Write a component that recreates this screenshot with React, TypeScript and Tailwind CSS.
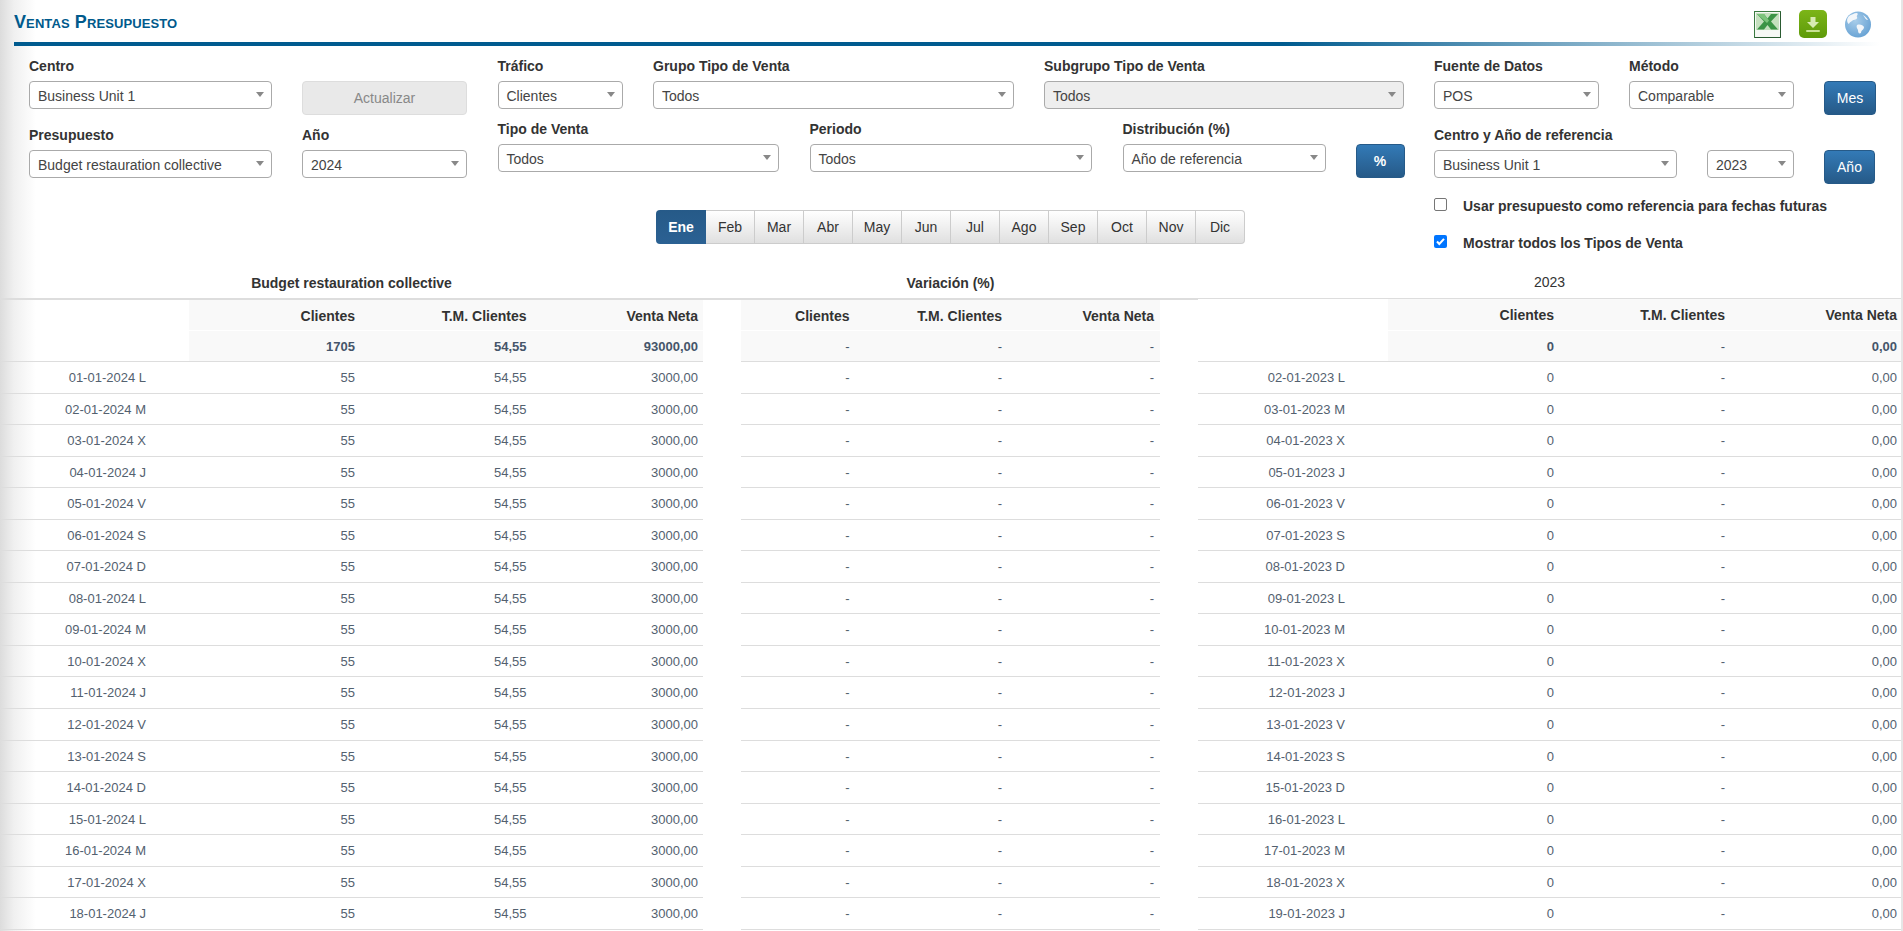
import React from "react";

const FONT = "font-['Liberation_Sans',Arial,sans-serif]";

function Label({ children }: { children: React.ReactNode }) {
  return <div className="h-[20px] text-[14px] leading-[20px] font-bold text-[#333] whitespace-nowrap">{children}</div>;
}

function Select({ value, disabled }: { value: string; disabled?: boolean }) {
  return (
    <div className={`relative mt-[5px] h-[28px] rounded-[4px] border border-[#aaa] pl-[8px] text-[14px] leading-[28px] text-[#444] ${disabled ? "bg-[#eee]" : "bg-white"}`}>
      <span className="whitespace-nowrap">{value}</span>
      <span className="absolute right-[7px] top-[10px] h-0 w-0 border-x-[4px] border-t-[5px] border-x-transparent border-t-[#888]" />
    </div>
  );
}

function Field({ label, value, w, disabled }: { label: string; value: string; w: string; disabled?: boolean }) {
  return (
    <div className={`${w} shrink-0`}>
      <Label>{label}</Label>
      <Select value={value} disabled={disabled} />
    </div>
  );
}

function BlueButton({ children, w, className = "" }: { children: React.ReactNode; w: string; className?: string }) {
  return (
    <div className={`${w} ${className} flex h-[34px] shrink-0 items-center justify-center rounded-[4px] border border-[#265a88] bg-gradient-to-b from-[#337ab7] to-[#265a88] text-[14px] text-white`}>
      {children}
    </div>
  );
}

const MONTHS = ["Feb", "Mar", "Abr", "May", "Jun", "Jul", "Ago", "Sep", "Oct", "Nov", "Dic"];

function Months() {
  return (
    <div className="flex pl-[656px]">
      <div className="flex h-[34px] w-[50px] items-center justify-center rounded-l-[4px] bg-gradient-to-b from-[#265a88] to-[#2b6193] text-[14px] font-bold text-white">Ene</div>
      {MONTHS.map((m, i) => (
        <div
          key={m}
          className={`flex h-[34px] w-[49px] items-center justify-center border-y border-r border-[#ccc] bg-gradient-to-b from-white to-[#e0e0e0] text-[14px] text-[#333] ${i === MONTHS.length - 1 ? "rounded-r-[4px]" : ""}`}
        >
          {m}
        </div>
      ))}
    </div>
  );
}

function ExcelIcon() {
  return (
    <svg width="27" height="27" viewBox="0 0 27 27">
      <rect x="0.5" y="0.5" width="26" height="26" fill="#f4f8f3" stroke="#3a7a40" />
      <rect x="2" y="2" width="23" height="17" fill="#c4e0be" />
      <path d="M3 3h7l3.500 4.500L17 3h7l-7 7.500 7 8h-7l-3.500-4.500L10 18.500H3l7-8z" fill="#3b9446" />
      <path d="M3 3h7l5 6.500-2 2.500z" fill="#7cc47c" />
      <rect x="2" y="20" width="23" height="5" fill="#f6f8f5" />
      <path d="M26.500 1v25.500H1" fill="none" stroke="#2a5a31" />
    </svg>
  );
}

function DownloadIcon() {
  return (
    <svg width="28" height="28" viewBox="0 0 28 28">
      <defs>
        <linearGradient id="g1" x1="0" y1="0" x2="0" y2="1">
          <stop offset="0" stopColor="#7cb518" />
          <stop offset="1" stopColor="#5e9a0a" />
        </linearGradient>
      </defs>
      <rect width="28" height="28" rx="5" fill="url(#g1)" />
      <path d="M11.500 7h5v5h3.500L14 18l-6-6h3.500z" fill="#d7ebb0" />
      <rect x="7" y="20" width="14" height="2" rx="1" fill="#c8e294" />
    </svg>
  );
}

function GlobeIcon() {
  return (
    <svg width="26" height="27" viewBox="0 0 26 27">
      <defs>
        <radialGradient id="g2" cx="0.4" cy="0.35" r="0.8">
          <stop offset="0" stopColor="#a8cdea" />
          <stop offset="1" stopColor="#5d9bd0" />
        </radialGradient>
      </defs>
      <circle cx="13" cy="13.500" r="13" fill="url(#g2)" />
      <path d="M4 5c2-1 5-3 8-3 2 1-1 3 0 4 1 2-2 3-4 3-1 2-3 1-4 4-2-1-3-5 0-8z" fill="#f2f6fa" />
      <path d="M12 14c3-1 6 0 7 2 0 3-3 3-3 6-2 1-3 0-3-3-1-2-2-3-1-5z" fill="#f2f6fa" />
      <path d="M18 4c2 1 4 3 5 5-2 0-3-2-5-5z" fill="#f2f6fa" />
    </svg>
  );
}

type TableProps = {
  wrap: string;
  spacer: string;
  headCols: string[];
  pr: string;
  rowCols: string[];
  rows: string[][];
  totals: string[];
  headH: string;
};

function DataTable({ wrap, spacer, headCols, pr, rowCols, rows, totals, headH }: TableProps) {
  return (
    <div className={`${wrap} shrink-0`}>
      <div className={`flex ${headH}`}>
        <div className={`${spacer} shrink-0`} />
        <div className={`flex flex-1 items-center bg-[#f9f9f9] pt-[2px] ${pr} text-[14px] font-bold text-[#333]`}>
          {["Clientes", "T.M. Clientes", "Venta Neta"].map((c, i) => (
            <div key={c} className={`${headCols[i]} shrink-0 whitespace-nowrap text-right`}>{c}</div>
          ))}
        </div>
      </div>
      <div className="mt-[1px] flex h-[30px]">
        <div className={`${spacer} shrink-0`} />
        <div className={`flex flex-1 items-center bg-[#f9f9f9] pt-[2px] ${pr} text-[13px] text-[#45556a]`}>
          {totals.map((c, i) => (
            <div key={i} className={`${headCols[i]} shrink-0 whitespace-nowrap text-right ${c === "-" ? "font-normal" : "font-bold"}`}>{c}</div>
          ))}
        </div>
      </div>
      <div className="border-t border-[#ddd]">
        {rows.map((r, i) => (
          <div key={i} className={`flex h-[31.56px] items-center border-b border-[#ddd] pt-[1px] ${pr} text-[13px] text-[#53616f]`}>
            {r.map((c, j) => (
              <div key={j} className={`${rowCols[j]} shrink-0 whitespace-nowrap text-right`}>{c}</div>
            ))}
          </div>
        ))}
      </div>
    </div>
  );
}

const DAYS = ["L", "M", "X", "J", "V", "S", "D"];
const dd = (n: number) => String(n).padStart(2, "0");

const rows2024 = Array.from({ length: 18 }, (_, i) => [`${dd(i + 1)}-01-2024 ${DAYS[i % 7]}`, "55", "54,55", "3000,00"]);
const rowsVar = Array.from({ length: 18 }, () => ["-", "-", "-"]);
const rows2023 = Array.from({ length: 18 }, (_, i) => [`${dd(i + 2)}-01-2023 ${DAYS[i % 7]}`, "0", "-", "0,00"]);

export default function App() {
  return (
    <div className={`${FONT} h-[931px] overflow-hidden bg-[linear-gradient(to_left,#e6e6e6_0px,#e6e6e6_2px,transparent_2px),linear-gradient(to_right,#dcdcdc_0px,#f0f0f0_14px,#ffffff_36px)]`}>
      {/* Title bar */}
      <div className="ml-[14px] mr-[23px]">
        <div className="flex h-[42px] items-start justify-between">
          <div className="mt-[12px] text-[18px] leading-[20px] font-bold tracking-[0.1px] text-[#005a8c] [font-variant:small-caps]">Ventas Presupuesto</div>
          <div className="flex items-start">
            <div className="mt-[11px]"><ExcelIcon /></div>
            <div className="ml-[18px] mt-[10px]"><DownloadIcon /></div>
            <div className="ml-[18px] mr-[9px] mt-[11px]"><GlobeIcon /></div>
          </div>
        </div>
        <div className="h-[4px] bg-[linear-gradient(to_right,#005b8f_0%,#005b8f_68%,#ffffff_100%)]" />
      </div>

      {/* Filters */}
      <div className="flex h-[164px] pl-[29px] pt-[10px]">
        <div className="w-[438px] shrink-0">
          <div className="flex gap-[30px]">
            <Field label="Centro" value="Business Unit 1" w="w-[243px]" />
            <div className="mt-[25px] flex h-[34px] w-[165px] items-center justify-center rounded-[4px] border border-[#ddd] bg-[#e9e9e9] text-[14px] text-[#888]">Actualizar</div>
          </div>
          <div className="mt-[10px] flex gap-[30px]">
            <Field label="Presupuesto" value="Budget restauration collective" w="w-[243px]" />
            <Field label="Año" value="2024" w="w-[165px]" />
          </div>
        </div>
        <div className="ml-[30.500px] w-[906px] shrink-0">
          <div className="flex gap-[30.500px]">
            <Field label="Tráfico" value="Clientes" w="w-[125px]" />
            <Field label="Grupo Tipo de Venta" value="Todos" w="w-[360.500px]" />
            <Field label="Subgrupo Tipo de Venta" value="Todos" w="w-[359.500px]" disabled />
          </div>
          <div className="mt-[10px] flex gap-[31px]">
            <Field label="Tipo de Venta" value="Todos" w="w-[281px]" />
            <Field label="Periodo" value="Todos" w="w-[282px]" />
            <Field label="Distribución (%)" value="Año de referencia" w="w-[203px]" />
            <BlueButton w="w-[49px]" className="ml-[-1px] mt-[25px] font-bold">%</BlueButton>
          </div>
        </div>
        <div className="ml-[30.500px] w-[445px] shrink-0">
          <div className="flex gap-[30.500px]">
            <Field label="Fuente de Datos" value="POS" w="w-[164.500px]" />
            <Field label="Método" value="Comparable" w="w-[164.500px]" />
            <BlueButton w="w-[52px]" className="mt-[25px]">Mes</BlueButton>
          </div>
          <div className="mt-[10px] flex">
            <Field label="Centro y Año de referencia" value="Business Unit 1" w="w-[242.500px]" />
            <Field label="&nbsp;" value="2023" w="ml-[30.500px] w-[86.500px]" />
            <BlueButton w="w-[51px]" className="ml-[30.500px] mt-[25px] pt-[1px]">Año</BlueButton>
          </div>
          <div className="mt-[10.500px] flex h-[20px] items-center">
            <span className="h-[13px] w-[13px] rounded-[2px] border border-[#767676] bg-white" />
            <span className="ml-[16px] mt-[4px] text-[14px] font-bold text-[#333]">Usar presupuesto como referencia para fechas futuras</span>
          </div>
          <div className="mt-[17px] flex h-[20px] items-center">
            <span className="flex h-[13px] w-[13px] items-center justify-center rounded-[2px] bg-[#0075ff]">
              <svg width="11" height="11" viewBox="0 0 11 11"><path d="M2 5.500l2.300 2.500L9 2.800" fill="none" stroke="#fff" strokeWidth="2" /></svg>
            </span>
            <span className="ml-[16px] mt-[4px] text-[14px] font-bold text-[#333]">Mostrar todos los Tipos de Venta</span>
          </div>
        </div>
      </div>

      <Months />

      {/* Group titles */}
      <div className="flex h-[54px] items-end text-[14px] text-[#333]">
        <div className="h-[30px] w-[703px] pt-[5px] text-center font-bold leading-[20px]">Budget restauration collective</div>
        <div className="h-[30px] w-[495px] pt-[5px] text-center font-bold leading-[20px]">Variación (%)</div>
        <div className="h-[30px] w-[703px] pt-[4px] text-center leading-[20px]">2023</div>
      </div>
      <div className="flex">
        <div className="h-[2px] w-[1198px] bg-[#ddd]" />
        <div className="h-[1px] w-[703px] bg-[#ddd]" />
      </div>

      {/* Tables */}
      <div className="flex">
        <DataTable
          wrap="w-[703px]"
          spacer="w-[189px]"
          headCols={["w-[166px]", "w-[171.500px]", "w-[171.500px]"]}
          pr="pr-[5px]"
          rowCols={["w-[146px]", "w-[209px]", "w-[171.500px]", "w-[171.500px]"]}
          rows={rows2024}
          totals={["1705", "54,55", "93000,00"]}
          headH="h-[30px]"
        />
        <DataTable
          wrap="ml-[38px] w-[419px]"
          spacer="w-0"
          headCols={["w-[108.500px]", "w-[152.500px]", "w-[152px]"]}
          pr="pr-[6px]"
          rowCols={["w-[108.500px]", "w-[152.500px]", "w-[152px]"]}
          rows={rowsVar}
          totals={["-", "-", "-"]}
          headH="h-[30px]"
        />
        <DataTable
          wrap="ml-[38px] -mt-[1px] w-[703px]"
          spacer="w-[190px]"
          headCols={["w-[166px]", "w-[171px]", "w-[172px]"]}
          pr="pr-[4px]"
          rowCols={["w-[147px]", "w-[209px]", "w-[171px]", "w-[172px]"]}
          rows={rows2023}
          totals={["0", "-", "0,00"]}
          headH="h-[31px]"
        />
      </div>
    </div>
  );
}
